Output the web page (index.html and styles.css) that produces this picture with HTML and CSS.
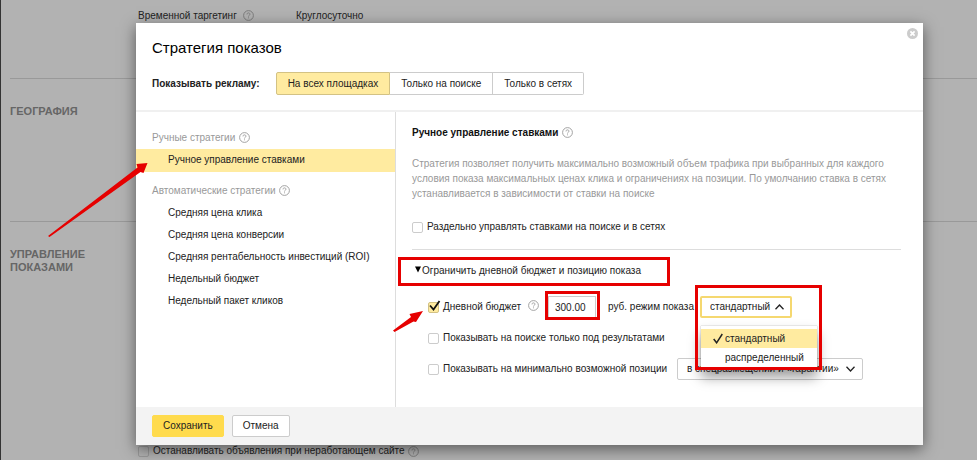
FILE: index.html
```html
<!DOCTYPE html>
<html lang="ru">
<head>
    <meta charset="UTF-8">
    <title>Стратегия показов</title>
    <meta name="viewport" content="width=device-width, initial-scale=1">
    <link rel="stylesheet" href="styles.css">
</head>
<body>
    <svg class="sprite" aria-hidden="true">
        <symbol id="help" viewBox="0 0 11 11">
            <circle cx="5.5" cy="5.5" r="4.9" fill="none" stroke="currentColor" stroke-width="0.9"/>
            <path d="M4 4.4C4 3.4 4.6 2.9 5.5 2.9S7 3.5 7 4.2C7 5.2 5.5 5.2 5.5 6.5M5.5 7.4V8.3" fill="none" stroke="currentColor" stroke-width="0.9"/>
        </symbol>
    </svg>

    <div class="page">
        <section class="section section-time">
            <h2 class="section-title"></h2>
            <div class="setting">
                <span class="setting-name">Временной таргетинг <svg class="help"><use href="#help"/></svg></span>
                <span>Круглосуточно</span>
            </div>
        </section>
        <section class="section section-geo">
            <h2 class="section-title">ГЕОГРАФИЯ</h2>
        </section>
        <section class="section section-shows">
            <h2 class="section-title">УПРАВЛЕНИЕ ПОКАЗАМИ</h2>
            <label class="check stop-ads"><input type="checkbox" class="checkbox">Останавливать объявления при неработающем сайте <svg class="help"><use href="#help"/></svg></label>
        </section>
    </div>

    <div class="overlay">
        <div class="modal" role="dialog" aria-labelledby="modal-title">
            <button class="close" aria-label="Закрыть">
                <svg viewBox="0 0 11 11"><circle cx="5.5" cy="5.5" r="5.5" fill="#ccc"/><path d="M3.4 3.4L7.6 7.6M7.6 3.4L3.4 7.6" stroke="#fff" stroke-width="1.7"/></svg>
            </button>
            <header class="modal-header">
                <h1 class="modal-title" id="modal-title">Стратегия показов</h1>
                <div class="places">
                    <span class="places-label">Показывать рекламу:</span>
                    <div class="toggle">
                        <button class="toggle-item active">На всех площадках</button>
                        <button class="toggle-item">Только на поиске</button>
                        <button class="toggle-item">Только в сетях</button>
                    </div>
                </div>
            </header>

            <div class="modal-body">
                <nav class="strategies">
                    <h3 class="group-title">Ручные стратегии <svg class="help"><use href="#help"/></svg></h3>
                    <ul class="group">
                        <li><a href="#" class="strategy active">Ручное управление ставками</a></li>
                    </ul>
                    <h3 class="group-title">Автоматические стратегии <svg class="help"><use href="#help"/></svg></h3>
                    <ul class="group">
                        <li><a href="#" class="strategy">Средняя цена клика</a></li>
                        <li><a href="#" class="strategy">Средняя цена конверсии</a></li>
                        <li><a href="#" class="strategy">Средняя рентабельность инвестиций (ROI)</a></li>
                        <li><a href="#" class="strategy">Недельный бюджет</a></li>
                        <li><a href="#" class="strategy">Недельный пакет кликов</a></li>
                    </ul>
                </nav>

                <div class="details">
                    <h2 class="details-title">Ручное управление ставками <svg class="help"><use href="#help"/></svg></h2>
                    <p class="description">Стратегия позволяет получить максимально возможный объем трафика при выбранных для каждого условия показа максимальных ценах клика и ограничениях на позиции. По умолчанию ставка в сетях устанавливается в зависимости от ставки на поиске</p>
                    <label class="check separate"><input type="checkbox" class="checkbox">Раздельно управлять ставками на поиске и в сетях</label>

                    <div class="limits">
                        <button class="limits-toggle"><svg class="triangle" viewBox="0 0 7 7"><path d="M0 0H7L3.5 7Z"/></svg>Ограничить дневной бюджет и позицию показа</button>
                        <div class="option">
                            <label class="check budget">
                                <span class="checked-box">
                                    <input type="checkbox" class="checkbox" checked>
                                    <svg class="tick" viewBox="0 0 13 12"><path d="M2 5.5L5.5 9.5L11.5 1" fill="none" stroke="#111" stroke-width="1.8"/></svg>
                                </span>Дневной бюджет</label>
                            <svg class="help budget-help"><use href="#help"/></svg>
                            <input type="text" class="sum" value="300.00" aria-label="Дневной бюджет, руб.">
                            <label class="mode-label" for="mode">руб. режим показа</label>
                            <div class="select-box">
                                <select class="select open" id="mode">
                                    <option>стандартный</option>
                                    <option>распределенный</option>
                                </select>
                                <svg class="arrow" viewBox="0 0 9 6"><path d="M0.5 5.2L4.5 1L8.5 5.2" fill="none" stroke="#222" stroke-width="1.3"/></svg>
                                <ul class="menu" role="listbox">
                                    <li class="menu-item active" role="option" aria-selected="true"><svg class="menu-tick" viewBox="0 0 10 11"><path d="M0.7 6L3.6 9.8L9.3 1" fill="none" stroke="#222" stroke-width="1.5"/></svg>стандартный</li>
                                    <li class="menu-item" role="option">распределенный</li>
                                </ul>
                            </div>
                        </div>
                        <div class="option">
                            <label class="check"><input type="checkbox" class="checkbox">Показывать на поиске только под результатами</label>
                        </div>
                        <div class="option">
                            <label class="check position"><input type="checkbox" class="checkbox">Показывать на минимально возможной позиции</label>
                            <div class="select-box">
                                <select class="select" aria-label="Позиция">
                                    <option>в спецразмещении и «гарантии»</option>
                                </select>
                                <svg class="arrow" viewBox="0 0 9 6"><path d="M0.5 0.8L4.5 5L8.5 0.8" fill="none" stroke="#222" stroke-width="1.3"/></svg>
                            </div>
                        </div>
                    </div>
                </div>
            </div>

            <footer class="modal-footer">
                <button class="button primary">Сохранить</button>
                <button class="button">Отмена</button>
            </footer>
        </div>
    </div>

    <!-- красные пометки поверх окна -->
    <svg class="marks" width="977" height="460" viewBox="0 0 977 460" aria-hidden="true">
        <g fill="none" stroke="#e60000" stroke-width="3">
            <rect x="399.5" y="258.5" width="269" height="26"/>
            <rect x="546.5" y="292.5" width="52" height="26"/>
            <rect x="696.5" y="286.5" width="124" height="82"/>
        </g>
        <g fill="#e60000">
            <path d="M48 236L49.5 237L140.5 172L143.5 173L147.5 163L136.5 164L137.5 167.5Z"/>
            <path d="M393 330.5L394.5 332L413.5 321.5L416 322L423 311L409.500 314L411 317Z"/>
        </g>
    </svg>
</body>
</html>
```

FILE: styles.css
```css
* {
    box-sizing: border-box;
}
body {
    margin: 0;
    background: #b2b2b2;
    color: #222;
    font-family: "Liberation Sans", Arial, sans-serif;
    font-size: 10px;
    line-height: 18px;
    height: 100vh;
    overflow: hidden;
}
h1, h2, h3, p, ul {
    margin: 0;
    padding: 0;
}
ul {
    list-style: none;
}
button, input, select {
    font: inherit;
    color: inherit;
    margin: 0;
}
.sprite {
    display: none;
}
.help {
    width: 11px;
    height: 11px;
    margin-left: 1px;
    color: #999;
    vertical-align: -2px;
    flex: none;
}

/* страница под окном */
.page {
    height: 100%;
    padding-left: 9px;
    border-left: 1px solid #333;
    display: flex;
    flex-direction: column;
}
.section {
    display: grid;
    grid-template-columns: 128px 1fr;
    border-bottom: 1px solid #999;
}
.section-time {
    height: 79px;
    padding-top: 7px;
}
.section-geo {
    height: 143px;
    padding-top: 26px;
}
.section-shows {
    flex: 1;
    padding-top: 26px;
    border: 0;
}
.section-title {
    font-size: 11px;
    line-height: 13px;
    color: #666;
}
.setting {
    display: flex;
}
.setting-name {
    width: 158px;
}
.page .help {
    color: #777;
    margin-left: 3px;
}
.stop-ads {
    align-self: end;
}
.stop-ads .checkbox {
    background: #b2b2b2;
    border-color: #999;
}

/* окно */
.overlay {
    position: absolute;
    inset: 0;
    padding: 23px 54px 15px 136px;
    display: flex;
}
.modal {
    position: relative;
    flex: 1;
    display: flex;
    flex-direction: column;
    background: #fff;
    box-shadow: 0 4px 14px rgba(0, 0, 0, 0.5);
}
.close {
    position: absolute;
    top: 5px;
    right: 5px;
    width: 11px;
    height: 11px;
    padding: 0;
    border: 0;
    background: none;
}
.close svg {
    display: block;
}
.modal-header {
    padding: 14px 16px 15px;
    border-bottom: 2px solid #f0f0f0;
}
.modal-title {
    font-size: 15px;
    line-height: 22px;
    font-weight: normal;
    color: #000;
}
.places {
    display: flex;
    align-items: center;
    gap: 16px;
    margin-top: 13px;
}
.places-label {
    font-weight: bold;
}
.toggle {
    display: flex;
}
.toggle-item {
    height: 23px;
    padding: 0 11px;
    background: #fff;
    border: 1px solid #ccc;
    border-left: 0;
}
.toggle-item.active {
    background: #ffeba0;
    border: 1px solid #d3c284;
    border-radius: 2px 0 0 2px;
}
.toggle-item:last-child {
    border-radius: 0 2px 2px 0;
}
.modal-body {
    flex: 1;
    display: flex;
}
.strategies {
    width: 260px;
    padding-top: 15px;
    border-right: 1px solid #ddd;
}
.group-title {
    padding-left: 16px;
    font-size: 10px;
    font-weight: normal;
    line-height: 22px;
    color: #999;
}
.group {
    margin-bottom: 8px;
}
.strategy {
    display: block;
    padding-left: 32px;
    line-height: 22px;
    color: #222;
    text-decoration: none;
}
.strategy.active {
    padding-bottom: 1px;
    background: #ffeba0;
}
.details {
    flex: 1;
    padding: 12px 22px 0 16px;
}
.details-title {
    font-size: 10px;
    color: #111;
}
.description {
    margin-top: 14px;
    line-height: 15px;
    color: #999;
}
.check {
    display: flex;
    align-items: center;
}
.checkbox {
    appearance: none;
    width: 11px;
    height: 11px;
    margin-right: 4px;
    background: #fff;
    border: 1px solid #ccc;
    border-radius: 2px;
    flex: none;
}
.checkbox:checked {
    background: #ffeba0;
    border-color: #d3c284;
}
.checked-box {
    position: relative;
    display: flex;
}
.tick {
    position: absolute;
    left: 0;
    top: -2px;
    width: 13px;
    height: 12px;
}
.separate {
    margin-top: 17px;
}
.limits {
    margin-top: 13px;
    padding-top: 12px;
    border-top: 1px solid #ddd;
}
.limits-toggle {
    display: block;
    padding: 0 0 0 3px;
    border: 0;
    background: none;
    line-height: 18px;
}
.triangle {
    width: 6px;
    height: 7px;
    margin-right: 1px;
    vertical-align: 1px;
}
.option {
    display: flex;
    align-items: center;
    padding-left: 16px;
    margin-top: 11px;
}
.limits-toggle + .option {
    margin-top: 16px;
}
.budget {
    min-width: 96px;
}
.position {
    min-width: 244px;
}
.budget-help {
    margin: 0 9px 3px 4px;
}
.sum {
    width: 48px;
    height: 22px;
    padding: 0 6px;
    border: 1px solid #ccc;
}
.mode-label {
    min-width: 87px;
    margin-left: 12px;
}
.select-box {
    position: relative;
    margin-left: 5px;
}
.select {
    appearance: none;
    display: block;
    width: 186px;
    height: 22px;
    padding: 0 0 0 9px;
    background: #fff;
    border: 1px solid #ccc;
    border-radius: 2px;
}
.select.open {
    width: 92px;
    padding-left: 8px;
    border: 2px solid #f5d870;
}
.arrow {
    position: absolute;
    right: 8px;
    top: 8px;
    width: 9px;
    height: 6px;
}
.menu {
    position: absolute;
    z-index: 1;
    left: 1px;
    top: 30px;
    width: 116px;
    padding: 3px 0 2px;
    background: #fff;
    box-shadow: 0 0 1px rgba(0, 0, 0, 0.4), 0 8px 12px rgba(0, 0, 0, 0.4);
}
.menu-item {
    padding-left: 24px;
    line-height: 19px;
}
.menu-item.active {
    display: flex;
    align-items: center;
    gap: 2px;
    padding-left: 12px;
    background: #ffeba0;
}
.menu-tick {
    width: 10px;
    height: 11px;
}
.modal-footer {
    display: flex;
    gap: 8px;
    padding: 8px 16px;
    background: #f3f3f3;
}
.button {
    height: 22px;
    padding: 0 10px;
    background: #fff;
    border: 1px solid #ccc;
    border-radius: 2px;
}
.button.primary {
    background: #ffdb4d;
    border-color: #ffdb4d;
}
.marks {
    position: absolute;
    left: 0;
    top: 0;
    z-index: 2;
    pointer-events: none;
}
```
